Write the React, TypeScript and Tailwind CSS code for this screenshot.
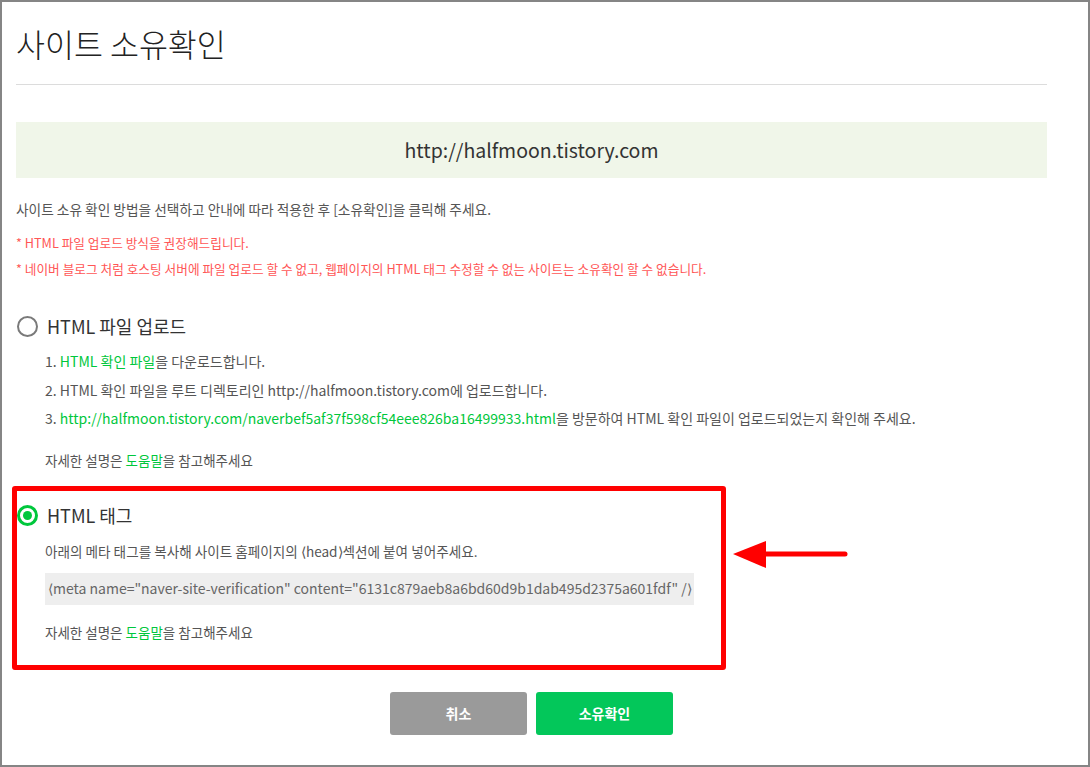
import React from 'react';

const font = { fontFamily: '"Noto Sans CJK KR", "Noto Sans", sans-serif' };

const Radio = ({ checked }: { checked?: boolean }) =>
  checked ? (
    <span className="flex h-[21px] w-[21px] items-center justify-center rounded-full border-[3px] border-[#00c73c] bg-white">
      <span className="h-[9px] w-[9px] rounded-full bg-[#00c73c]" />
    </span>
  ) : (
    <span className="h-[21px] w-[21px] rounded-full border-2 border-[#7a7a7a] bg-white" />
  );

const HelpLine = () => (
  <p className="text-[13.5px] leading-[20px] text-[#555]">
    자세한 설명은 <span className="text-[#00c73c]">도움말</span>을 참고해주세요
  </p>
);

export default function App() {
  return (
    <div
      style={font}
      className="relative box-border h-[767px] w-[1090px] overflow-hidden border-2 border-[#858585] bg-white pl-[14px] pr-[41px] pt-[22px]"
    >
      {/* Title */}
      <h1 className="text-[31.5px] font-light leading-[38px] text-[#222]">사이트 소유확인</h1>
      <div className="mt-[22px] h-px bg-[#dcdcdc]" />

      {/* Site URL */}
      <div className="mt-[37px] flex h-[56px] items-center justify-center bg-[#f0f6e9] text-[19.5px] text-[#333]">
        http://halfmoon.tistory.com
      </div>

      <p className="mt-[21px] text-[13.7px] leading-[20px] text-[#555]">
        사이트 소유 확인 방법을 선택하고 안내에 따라 적용한 후 [소유확인]을 클릭해 주세요.
      </p>
      <p className="mt-[15px] text-[12.7px] leading-[18px] text-[#ff5656]">
        * HTML 파일 업로드 방식을 권장해드립니다.
      </p>
      <p className="mt-[8px] text-[12.7px] leading-[18px] text-[#ff5656]">
        * 네이버 블로그 처럼 호스팅 서버에 파일 업로드 할 수 없고, 웹페이지의 HTML 태그 수정할 수 없는 사이트는 소유확인 할 수 없습니다.
      </p>

      {/* HTML file upload */}
      <div className="mt-[36px] ml-px flex h-[24px] items-center gap-[9px]">
        <Radio />
        <span className="text-[18px] text-[#333]">HTML 파일 업로드</span>
      </div>
      <div className="mt-[9px] pl-[29px]">
        <ol className="text-[14px] leading-[28.5px] text-[#555]">
          <li>
            1. <span className="text-[#00c73c]">HTML 확인 파일</span>을 다운로드합니다.
          </li>
          <li>2. HTML 확인 파일을 루트 디렉토리인 http://halfmoon.tistory.com에 업로드합니다.</li>
          <li>
            3.{' '}
            <span className="text-[#00c73c]">
              http://halfmoon.tistory.com/naverbef5af37f598cf54eee826ba16499933.html
            </span>
            을 방문하여 HTML 확인 파일이 업로드되었는지 확인해 주세요.
          </li>
        </ol>
        <div className="mt-[17px]">
          <HelpLine />
        </div>
      </div>

      {/* HTML tag, highlighted */}
      <div className="mt-[16px] -ml-[4px] w-[714px] rounded-[3px] border-[5px] border-[#ff0000] pt-[13px] pb-[23px]">
        <div className="flex h-[24px] items-center gap-[9px]">
          <Radio checked />
          <span className="text-[18px] text-[#333]">HTML 태그</span>
        </div>
        <div className="pl-[28px]">
          <p className="mt-[13px] text-[13.6px] leading-[20px] text-[#555]">
            아래의 메타 태그를 복사해 사이트 홈페이지의 ⟨head⟩섹션에 붙여 넣어주세요.
          </p>
          <div className="mt-[12px] flex h-[32px] w-[649px] items-center bg-[#eeeeee] pl-[3px] text-[14px] text-[#666]">
            ⟨meta name="naver-site-verification" content="6131c879aeb8a6bd60d9b1dab495d2375a601fdf" /⟩
          </div>
          <div className="mt-[17px]">
            <HelpLine />
          </div>
        </div>
      </div>

      {/* Buttons */}
      <div className="mt-[22px] flex justify-center gap-[9px]">
        <button className="h-[43px] w-[137px] rounded-[3px] bg-[#9a9a9a] text-[14px] font-bold text-white">
          취소
        </button>
        <button className="h-[43px] w-[137px] rounded-[3px] bg-[#03c75a] text-[14px] font-bold text-white">
          소유확인
        </button>
      </div>

      {/* Annotation arrow */}
      <svg className="absolute left-[726px] top-[536px]" width="126" height="32" viewBox="726 536 126 32">
        <line x1="760" y1="552" x2="843" y2="552" stroke="#ff0000" strokeWidth="5" strokeLinecap="round" />
        <polygon points="731,552 764,539 764,566" fill="#ff0000" />
      </svg>
    </div>
  );
}
